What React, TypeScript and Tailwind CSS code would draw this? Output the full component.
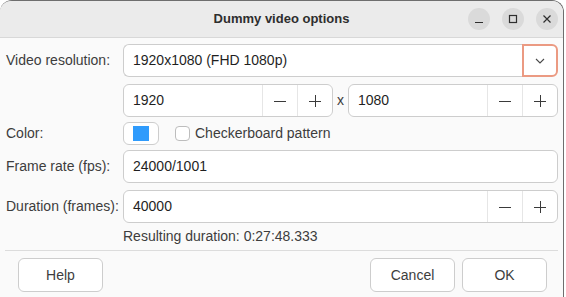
import React from "react";

const font = { fontFamily: '"Liberation Sans", Arial, sans-serif' };

function Minus() {
    return (
        <svg width="12" height="12" viewBox="0 0 12 12">
            <path d="M0 6.5H12" stroke="#3a3a3a" strokeWidth="1" />
        </svg>
    );
}

function Plus() {
    return (
        <svg width="12" height="12" viewBox="0 0 12 12">
            <path d="M0 6.5H12M6.5 0V12" stroke="#3a3a3a" strokeWidth="1" />
        </svg>
    );
}

function SpinButton({ value, className }: { value: string; className?: string }) {
    return (
        <div
            className={`flex h-[33px] rounded-[6px] border border-[#cdcdcd] bg-white ${className ?? ""}`}
        >
            <div className="flex flex-1 items-center pl-[9px] text-[14px] text-[#1f1f1f]">
                {value}
            </div>
            <div className="flex w-[35px] items-center justify-center border-l border-[#e6e6e6]">
                <Minus />
            </div>
            <div className="flex w-[35px] items-center justify-center border-l border-[#e6e6e6]">
                <Plus />
            </div>
        </div>
    );
}

function Label({ children }: { children: React.ReactNode }) {
    return (
        <div className="flex w-[117px] shrink-0 items-center text-[14px] text-[#3d3d3d]">
            {children}
        </div>
    );
}

export default function App() {
    return (
        <div className="h-[297px] w-[566px] overflow-hidden bg-white" style={font}>
            <div className="h-[310px] w-[564px] overflow-hidden rounded-t-[12px] border-t border-r border-[#6e6e6e] bg-[#fafafa]">
                {/* Title bar */}
                <div className="relative flex h-[37px] items-center justify-center border-b border-[#d8d8d8] bg-[#ebebeb]">
                    <span className="text-[13px] font-bold text-[#2e2e2e]">Dummy video options</span>
                    <div className="absolute right-[5px] top-[7px] flex gap-[12px]">
                        <div className="flex h-[22px] w-[22px] items-center justify-center rounded-full bg-[#dadada]">
                            <svg width="10" height="10" viewBox="0 0 10 10">
                                <path d="M1 8.5H9" stroke="#2e2e2e" strokeWidth="1.2" />
                            </svg>
                        </div>
                        <div className="flex h-[22px] w-[22px] items-center justify-center rounded-full bg-[#dadada]">
                            <svg width="10" height="10" viewBox="0 0 10 10">
                                <rect x="1.5" y="1.5" width="7" height="7" fill="none" stroke="#2e2e2e" strokeWidth="1.2" />
                            </svg>
                        </div>
                        <div className="flex h-[22px] w-[22px] items-center justify-center rounded-full bg-[#dadada]">
                            <svg width="10" height="10" viewBox="0 0 10 10">
                                <path d="M1.5 1.5L8.5 8.5M8.5 1.5L1.5 8.5" stroke="#2e2e2e" strokeWidth="1.2" />
                            </svg>
                        </div>
                    </div>
                </div>

                {/* Form */}
                <div className="flex flex-col pl-[6px] pr-[5px] pt-[6px]">
                    <div className="flex">
                        <Label>Video resolution:</Label>
                        <div className="flex h-[33px] flex-1">
                            <div className="flex flex-1 items-center rounded-l-[6px] border border-r-0 border-[#cdcdcd] bg-white pl-[9px] text-[14px] text-[#1f1f1f]">
                                1920x1080 (FHD 1080p)
                            </div>
                            <div className="flex w-[36px] items-center justify-center rounded-r-[6px] border-2 border-[#eb9a82] bg-white">
                                <svg width="10" height="6" viewBox="0 0 10 6">
                                    <path d="M1 1L5 5L9 1" fill="none" stroke="#4a4a4a" strokeWidth="1.1" />
                                </svg>
                            </div>
                        </div>
                    </div>

                    <div className="mt-[7px] flex items-center pl-[117px]">
                        <SpinButton value="1920" className="w-[210px]" />
                        <span className="w-[15px] text-center text-[14px] text-[#3d3d3d]">x</span>
                        <SpinButton value="1080" className="flex-1" />
                    </div>

                    <div className="mt-[4px] flex h-[25px] items-center">
                        <Label>Color:</Label>
                        <div className="flex h-[23px] w-[36px] items-center justify-center rounded-[6px] border border-[#cdcdcd] bg-white">
                            <div className="h-[15px] w-[16px] bg-[#2f9bfc]" />
                        </div>
                        <div className="ml-[16px] h-[15px] w-[15px] rounded-[4px] border border-[#bdbdbd] bg-white" />
                        <span className="ml-[5px] text-[14px] text-[#3d3d3d]">Checkerboard pattern</span>
                    </div>

                    <div className="mt-[4px] flex">
                        <Label>Frame rate (fps):</Label>
                        <div className="flex h-[33px] flex-1 items-center rounded-[6px] border border-[#cdcdcd] bg-white pl-[9px] text-[14px] text-[#1f1f1f]">
                            24000/1001
                        </div>
                    </div>

                    <div className="mt-[7px] flex">
                        <Label>Duration (frames):</Label>
                        <SpinButton value="40000" className="flex-1" />
                    </div>

                    <div className="mt-[5px] pl-[117px] text-[14px] leading-[17px] text-[#3d3d3d]">
                        Resulting duration: 0:27:48.333
                    </div>
                </div>

                {/* Footer */}
                <div className="mx-[5px] mt-[5px] border-t border-[#dcdcdc]" />
                <div className="flex pl-[18px] pr-[16px] pt-[7px]">
                    <button className="h-[34px] w-[85px] rounded-[6px] border border-[#cdcdcd] bg-white text-[14px] text-[#3d3d3d]">
                        Help
                    </button>
                    <div className="flex-1" />
                    <button className="h-[34px] w-[85px] rounded-[6px] border border-[#cdcdcd] bg-white text-[14px] text-[#3d3d3d]">
                        Cancel
                    </button>
                    <button className="ml-[7px] h-[34px] w-[85px] rounded-[6px] border border-[#cdcdcd] bg-white text-[14px] text-[#3d3d3d]">
                        OK
                    </button>
                </div>
            </div>
        </div>
    );
}
